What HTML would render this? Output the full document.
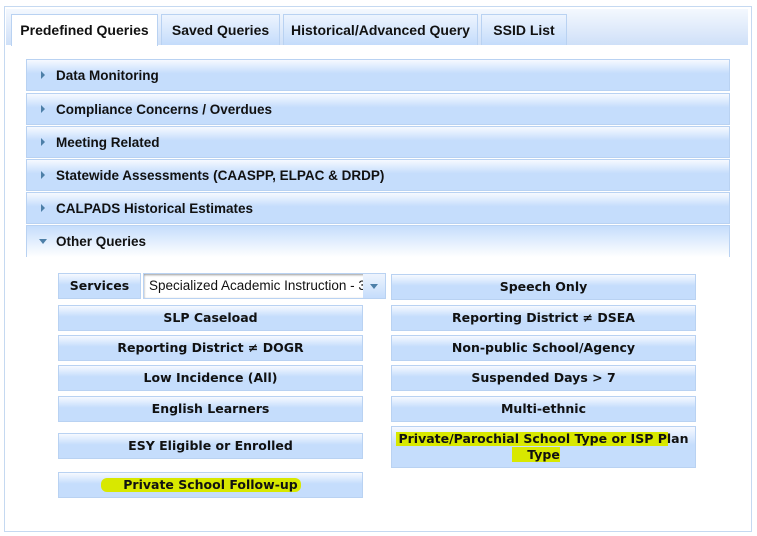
<!DOCTYPE html>
<html><head><style>
*{box-sizing:border-box;margin:0;padding:0}
body{width:757px;height:536px;background:#fff;position:relative;overflow:hidden;font-family:"Liberation Sans",Arial,sans-serif}
.abs{position:absolute}
.outer{left:4px;top:6px;width:748px;height:526px;border:1px solid #c5d9f1;border-top:1px solid #c5d9f1}
.tabbar{left:6px;top:9px;width:742px;height:36px;background:linear-gradient(#f4f8fe,#cfe0f8)}
.tab{top:14px;height:31px;border:1px solid #b9d2f2;border-bottom:none;background:linear-gradient(#edf4fe,#c4dcfb);font-weight:bold;font-size:14px;color:#111;text-align:center;line-height:31px}
.tab.act{background:#fff;height:32px}
.hdr{left:26px;width:704px;height:32px;border:1px solid #b9d2f2;background:linear-gradient(#f6f9ff 0%,#c5ddfc 45%,#c5ddfc 100%);font-weight:bold;font-size:13.5px;color:#111;line-height:31px;padding-left:29px}
.hdr:before{content:"";position:absolute;left:14px;top:11px;border-left:4px solid #4d7fa8;border-top:4px solid transparent;border-bottom:4px solid transparent}
.open{background:linear-gradient(#c5ddfc 0%,#fff 100%);border-bottom:none}
.open:before{left:12px;top:13px;border-top:5px solid #4d7fa8;border-left:4px solid transparent;border-right:4px solid transparent;border-bottom:none}
.btn{height:26px;border:1px solid #b9d2f2;background:linear-gradient(#f6f9ff 0%,#c5ddfc 45%,#c5ddfc 100%);font-family:"DejaVu Sans",Verdana,sans-serif;font-weight:bold;font-size:12.5px;color:#111;text-align:center;line-height:24px}
.L{left:58px;width:305px}.R{left:391px;width:305px}
.hl{background:#d8e800;position:absolute}
</style></head><body>
<div class="abs outer"></div>
<div class="abs tabbar"></div>
<div class="abs tab act" style="left:11px;width:147px">Predefined Queries</div>
<div class="abs tab" style="left:161px;width:119px">Saved Queries</div>
<div class="abs tab" style="left:283px;width:195px">Historical/Advanced Query</div>
<div class="abs tab" style="left:481px;width:86px">SSID List</div>

<div class="abs hdr" style="top:59px">Data Monitoring</div>
<div class="abs hdr" style="top:93px">Compliance Concerns / Overdues</div>
<div class="abs hdr" style="top:126px">Meeting Related</div>
<div class="abs hdr" style="top:159px">Statewide Assessments (CAASPP, ELPAC &amp; DRDP)</div>
<div class="abs hdr" style="top:192px">CALPADS Historical Estimates</div>
<div class="abs hdr open" style="top:225px">Other Queries</div>

<div class="abs btn" style="left:58px;width:83px;top:273px">Services</div>
<div class="abs" style="left:143px;top:273px;width:243px;height:26px;border:1px solid #b9d2f2;background:#fff;font-size:13.5px;line-height:24px;padding-left:5px;color:#111;overflow:hidden;white-space:nowrap;box-shadow:inset 0 1px 2px #999">Specialized Academic Instruction - 33</div>
<div class="abs" style="left:363px;top:274px;width:22px;height:24px;background:linear-gradient(#eef4fd,#c5ddfc)"><div class="abs" style="left:7px;top:10px;border-top:5px solid #4d7fa8;border-left:4px solid transparent;border-right:4px solid transparent"></div></div>
<div class="abs btn R" style="top:274px">Speech Only</div>

<div class="abs btn L" style="top:305px">SLP Caseload</div>
<div class="abs btn R" style="top:305px">Reporting District ≠ DSEA</div>
<div class="abs btn L" style="top:335px">Reporting District ≠ DOGR</div>
<div class="abs btn R" style="top:335px">Non-public School/Agency</div>
<div class="abs btn L" style="top:365px">Low Incidence (All)</div>
<div class="abs btn R" style="top:365px">Suspended Days &gt; 7</div>
<div class="abs btn L" style="top:396px">English Learners</div>
<div class="abs btn R" style="top:396px">Multi-ethnic</div>
<div class="abs btn L" style="top:433px">ESY Eligible or Enrolled</div>
<div class="abs btn R" style="top:426px;height:42px;line-height:16px;padding-top:4px">
<span class="hl" style="left:4px;top:5px;width:272px;height:14px"></span>
<span class="hl" style="left:120px;top:20px;width:48px;height:15px"></span>
<span style="position:relative">Private/Parochial School Type or ISP Plan<br>Type</span></div>
<div class="abs btn L" style="top:472px">
<span class="hl" style="left:42px;top:5px;width:200px;height:14px;border-radius:6px"></span>
<span style="position:relative">Private School Follow-up</span></div>
</body></html>
